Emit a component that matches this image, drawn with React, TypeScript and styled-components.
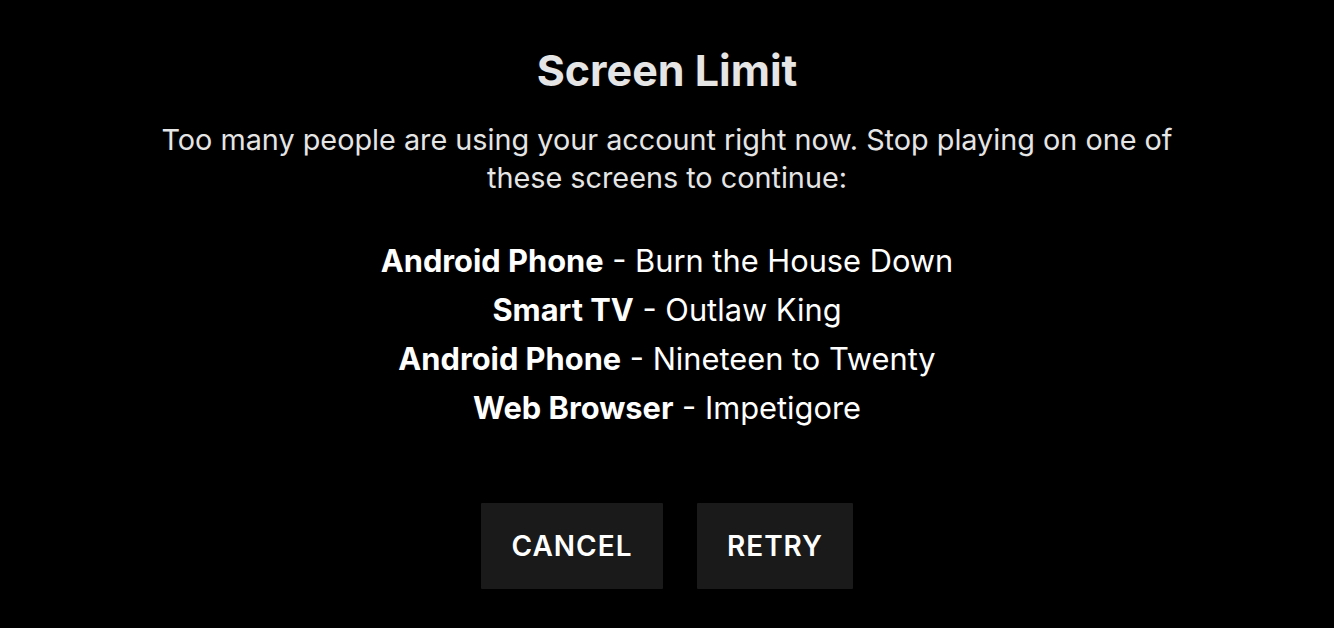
import React from "react";
import styled, { createGlobalStyle } from "styled-components";

const Global = createGlobalStyle`
  html, body { margin: 0; padding: 0; background: #000; }
  body { font-family: Inter, "Noto Sans", "Liberation Sans", sans-serif; }
`;

const Page = styled.div`
  width: 1334px;
  height: 628px;
  background: #000;
  display: flex;
  flex-direction: column;
  align-items: center;
  box-sizing: border-box;
  padding-top: 44px;
`;

const Title = styled.h1`
  margin: 0;
  font-size: 43px;
  font-weight: 700;
  color: #e5e5e5;
  line-height: 52px;
  letter-spacing: 0;
`;

const Message = styled.p`
  margin: 25px 0 0;
  width: 1030px;
  text-align: center;
  font-size: 28.8px;
  font-weight: 400;
  line-height: 38px;
  color: #e5e5e5;
`;

const List = styled.ul`
  list-style: none;
  margin: 39px 0 0;
  padding: 0;
  display: flex;
  flex-direction: column;
  align-items: center;
`;

const Item = styled.li`
  font-size: 30.8px;
  line-height: 49px;
  color: #fff;
`;

const Device = styled.strong`
  font-weight: 700;
`;

const Buttons = styled.div`
  display: flex;
  gap: 34px;
  margin-top: 71px;
`;

const Button = styled.button<{ $w: number }>`
  width: ${(p) => p.$w}px;
  height: 86px;
  background: #1a1a1a;
  border: none;
  border-radius: 1px;
  color: #fff;
  font-family: inherit;
  font-size: 28px;
  font-weight: 600;
  letter-spacing: 1px;
  cursor: pointer;
`;

const sessions = [
  { device: "Android Phone", title: "Burn the House Down" },
  { device: "Smart TV", title: "Outlaw King" },
  { device: "Android Phone", title: "Nineteen to Twenty" },
  { device: "Web Browser", title: "Impetigore" },
];

export default function App() {
  return (
    <>
      <Global />
      <Page>
        <Title>Screen Limit</Title>
        <Message>
          Too many people are using your account right now. Stop playing on one of these screens to continue:
        </Message>
        <List>
          {sessions.map((s, i) => (
            <Item key={i}>
              <Device>{s.device}</Device> - {s.title}
            </Item>
          ))}
        </List>
        <Buttons>
          <Button $w={182}>CANCEL</Button>
          <Button $w={156}>RETRY</Button>
        </Buttons>
      </Page>
    </>
  );
}
